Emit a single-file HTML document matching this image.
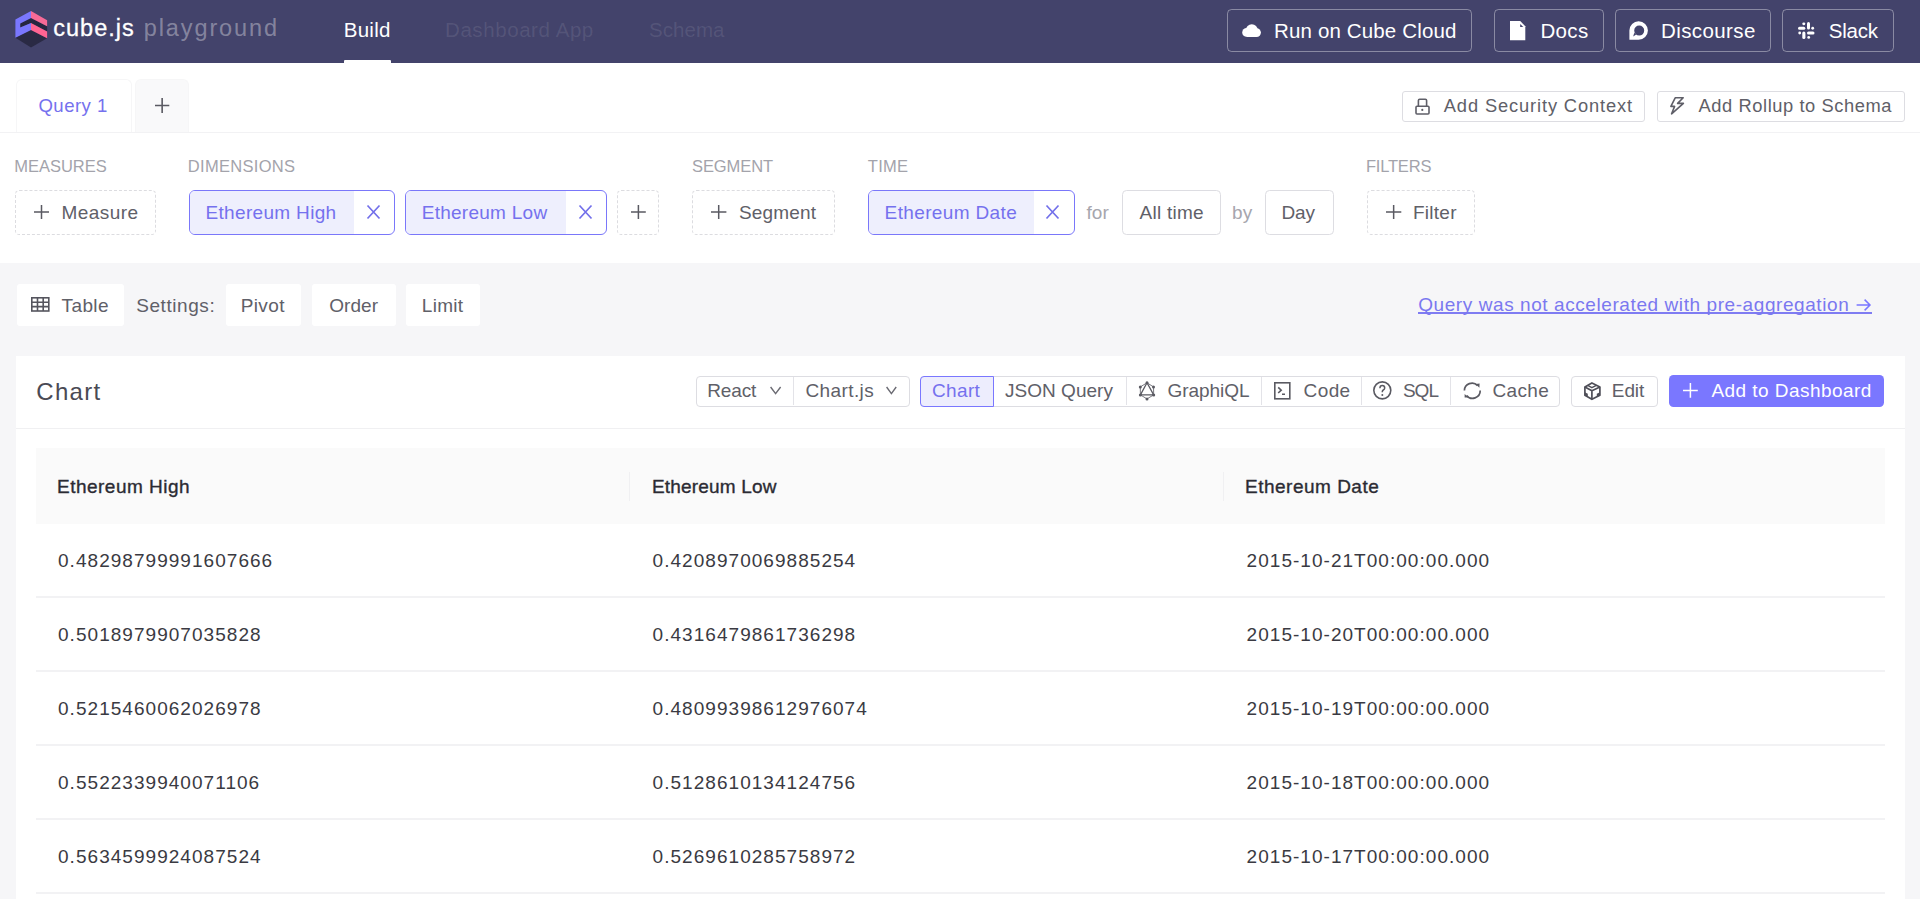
<!DOCTYPE html>
<html><head><meta charset="utf-8"><title>cube.js playground</title>
<style>
html,body{margin:0;padding:0;}
body{width:1920px;height:899px;overflow:hidden;position:relative;background:#f6f6f8;font-family:"Liberation Sans",sans-serif;}
.a{position:absolute;box-sizing:border-box;}
.t{position:absolute;white-space:pre;line-height:1;font-family:"Liberation Sans",sans-serif;}
svg{position:absolute;overflow:visible;}
.hb{border:1.5px solid rgba(255,255,255,0.38);border-radius:4.5px;}
.bd{border:1.5px solid #dddde2;border-radius:4.5px;background:#fff;}
.ds{border:1.5px dashed #dcdce0;border-radius:4.5px;background:#fff;}
.chip{border:1.75px solid #7a77fa;border-radius:6px;background:#fff;overflow:hidden;}
.chip i{position:absolute;left:0;top:0;bottom:0;background:#eeeffd;}
.sb{background:#fff;border-radius:3px;}
.ln{background:#f0f0f2;}

</style></head>
<body>
<!-- header -->
<div class="a" style="left:0;top:0;width:1920px;height:62.5px;background:#43436b"></div>
<div class="a" style="left:344px;top:59.5px;width:47px;height:3px;background:#fff;border-radius:1px 1px 0 0"></div>
<div class="a hb" style="left:1227px;top:9px;width:245px;height:43px"></div>
<div class="a hb" style="left:1494px;top:9px;width:110px;height:43px"></div>
<div class="a hb" style="left:1615px;top:9px;width:156px;height:43px"></div>
<div class="a hb" style="left:1782px;top:9px;width:112px;height:43px"></div>
<!-- white panels -->
<div class="a" style="left:0;top:62.5px;width:1920px;height:200px;background:#fff"></div>
<div class="a" style="left:0;top:131.5px;width:1920px;height:1.5px;background:#f2f2f4"></div>
<div class="a" style="left:16px;top:79px;width:116px;height:53px;background:#fff;border:1.5px solid #f6f6f7;border-bottom:none;border-radius:6px 6px 0 0"></div>
<div class="a" style="left:135px;top:79px;width:54px;height:53px;background:#f9f9fa;border:1.5px solid #f6f6f7;border-bottom:none;border-radius:6px 6px 0 0"></div>
<div class="a bd" style="left:1401.5px;top:90.5px;width:243px;height:31px;border-radius:3px"></div>
<div class="a bd" style="left:1656.5px;top:90.5px;width:248px;height:31px;border-radius:3px"></div>
<!-- query builder -->
<div class="a ds" style="left:15px;top:189.5px;width:141px;height:45.5px"></div>
<div class="a chip" style="left:188.5px;top:189.5px;width:206px;height:45.5px"><i style="width:164px"></i></div>
<div class="a chip" style="left:404.5px;top:189.5px;width:202px;height:45.5px"><i style="width:160px"></i></div>
<div class="a ds" style="left:616.5px;top:189.5px;width:42px;height:45.5px"></div>
<div class="a ds" style="left:692px;top:189.5px;width:143px;height:45.5px"></div>
<div class="a chip" style="left:867.5px;top:189.5px;width:207.5px;height:45.5px"><i style="width:165px"></i></div>
<div class="a bd" style="left:1121.5px;top:189.5px;width:99px;height:45.5px"></div>
<div class="a bd" style="left:1265px;top:189.5px;width:68.5px;height:45.5px"></div>
<div class="a ds" style="left:1366.5px;top:189.5px;width:108.5px;height:45.5px"></div>
<!-- settings row -->
<div class="a sb" style="left:17px;top:284px;width:107px;height:42px"></div>
<div class="a sb" style="left:226px;top:284px;width:74.5px;height:42px"></div>
<div class="a sb" style="left:312px;top:284px;width:83.5px;height:42px"></div>
<div class="a sb" style="left:406px;top:284px;width:73.5px;height:42px"></div>
<!-- card -->
<div class="a" style="left:16px;top:356px;width:1888.5px;height:560px;background:#fff"></div>
<div class="a ln" style="left:16px;top:427.5px;width:1888.5px;height:1.5px"></div>
<div class="a bd" style="left:695.5px;top:375.5px;width:214px;height:31px;border-radius:4px"></div>
<div class="a ln" style="left:792.5px;top:377px;width:1.5px;height:28px;background:#e3e3e8"></div>
<div class="a bd" style="left:920px;top:375.5px;width:640px;height:31px;border-radius:4px"></div>
<div class="a" style="left:920px;top:375.5px;width:73.5px;height:31px;border:1.5px solid #7a77ff;background:#ededfd;border-radius:4px 0 0 4px"></div>
<div class="a ln" style="left:1125.5px;top:377px;width:1.5px;height:28px;background:#e3e3e8"></div>
<div class="a ln" style="left:1260.5px;top:377px;width:1.5px;height:28px;background:#e3e3e8"></div>
<div class="a ln" style="left:1360.5px;top:377px;width:1.5px;height:28px;background:#e3e3e8"></div>
<div class="a ln" style="left:1449.5px;top:377px;width:1.5px;height:28px;background:#e3e3e8"></div>
<div class="a bd" style="left:1571px;top:375.5px;width:86.5px;height:31px;border-radius:4px"></div>
<div class="a" style="left:1669px;top:374.5px;width:215px;height:32.5px;background:#7a77ff;border-radius:4.5px"></div>
<!-- table -->
<div class="a" style="left:35.5px;top:447.5px;width:1849px;height:76px;background:#fafafa"></div>
<div class="a ln" style="left:628.5px;top:472px;width:1.5px;height:28.5px"></div>
<div class="a ln" style="left:1222.5px;top:472px;width:1.5px;height:28.5px"></div>
<div class="a" style="left:35.5px;top:596px;width:1849px;height:1.5px;background:#f2f2f4"></div>
<div class="a" style="left:35.5px;top:670px;width:1849px;height:1.5px;background:#f2f2f4"></div>
<div class="a" style="left:35.5px;top:744px;width:1849px;height:1.5px;background:#f2f2f4"></div>
<div class="a" style="left:35.5px;top:818px;width:1849px;height:1.5px;background:#f2f2f4"></div>
<div class="a" style="left:35.5px;top:892px;width:1849px;height:1.5px;background:#f2f2f4"></div>
<!-- link underline + arrow -->
<div class="a" style="left:1418px;top:312.3px;width:454px;height:1.3px;background:#7f7cf2"></div>
<svg style="left:1856px;top:298px" width="16" height="14" viewBox="0 0 16 14"><path d="M0.6,7 H14 M8.6,1.6 L14,7 L8.6,12.4" stroke="#7a77ff" stroke-width="1.5" fill="none"/></svg>
<!-- logo -->
<svg style="left:0;top:0" width="60" height="60" viewBox="0 0 60 60">
<polygon points="15.4,37.7 31,30 47.1,38.3 31,47.4" fill="#2a2a44"/>
<polygon points="20.2,23.4 31,18 47.1,26.2 47.1,31.6 31,23.1 20.2,27.5" fill="#262640"/>
<polygon points="15.4,19.6 31,10.9 31,18 20.2,23.4 20.2,27.5 31,23.1 31,30 15.4,37.7" fill="#7a77ff"/>
<polygon points="31,10.9 47.1,20.3 47.1,26.2 31,18" fill="#f76a97"/>
<polygon points="31,23.1 47.1,31.6 47.1,38.3 31,30" fill="#ff6492"/>
</svg>
<!-- cloud -->
<svg style="left:1242px;top:24px" width="19" height="13" viewBox="0 0 19 13">
<g fill="#fff"><circle cx="4.6" cy="8.4" r="4.4"/><circle cx="9.8" cy="6.2" r="6"/><circle cx="14.6" cy="8.6" r="4.3"/><rect x="4.6" y="7" width="10" height="6"/></g>
</svg>
<!-- doc -->
<svg style="left:1510px;top:20.7px" width="16" height="20" viewBox="0 0 16 20">
<polygon points="0,0 10.2,0 15.3,5.2 15.3,19.3 0,19.3" fill="#fff"/>
<polygon points="10.2,3 10.2,6.1 13.3,6.1" fill="#43436b"/>
</svg>
<!-- discourse -->
<svg style="left:1629px;top:21px" width="19" height="19" viewBox="0 0 19 19">
<path fill="#fff" fill-rule="evenodd" d="M9.6,0.2 A9.2,9.2 0 1 1 9.6,18.8 L0.4,18.8 L0.4,9.4 A9.2,9.2 0 0 1 9.6,0.2 Z M10.2,4.6 A5,5 0 1 0 10.2,14.6 A5,5 0 1 0 10.2,4.6 Z"/>
<polygon points="4.2,15.6 5.3,11.8 7.2,13.6" fill="#43436b"/>
</svg>
<!-- slack -->
<svg style="left:1797.7px;top:22.3px" width="17" height="17" viewBox="0 0 17 17">
<g fill="#fff">
<rect x="9" y="0" width="3" height="7.4" rx="1.5"/>
<rect x="4.3" y="0.4" width="3" height="2.8" rx="1.4"/>
<rect x="0" y="4.7" width="7.3" height="3" rx="1.5"/>
<rect x="0.3" y="9.6" width="2.8" height="2.9" rx="1.4"/>
<rect x="4.3" y="9.4" width="3.1" height="7.6" rx="1.5"/>
<rect x="9.3" y="14" width="2.8" height="2.8" rx="1.4"/>
<rect x="9" y="9.4" width="7.5" height="3" rx="1.5"/>
<rect x="13.3" y="4.8" width="2.8" height="2.9" rx="1.4"/>
</g>
</svg>
<!-- plus icons -->
<svg style="left:155.3px;top:98.4px" width="15" height="15" viewBox="0 0 15 15"><path d="M7.15,0 V14.9 M0,7.45 H14.3" stroke="#5a5a62" stroke-width="1.6" fill="none"/></svg>
<svg style="left:34px;top:205px" width="15" height="14" viewBox="0 0 15 14"><path d="M7.5,0 V14 M0,7 H15" stroke="#5a5a62" stroke-width="1.5" fill="none"/></svg>
<svg style="left:631px;top:205px" width="15" height="14" viewBox="0 0 15 14"><path d="M7.4,0 V14 M0,7 H14.8" stroke="#5a5a62" stroke-width="1.5" fill="none"/></svg>
<svg style="left:710.6px;top:205px" width="15" height="14" viewBox="0 0 15 14"><path d="M7.7,0 V14 M0,7 H15.4" stroke="#5a5a62" stroke-width="1.5" fill="none"/></svg>
<svg style="left:1385.5px;top:205px" width="15" height="14" viewBox="0 0 15 14"><path d="M7.65,0 V14 M0,7 H15.3" stroke="#5a5a62" stroke-width="1.5" fill="none"/></svg>
<svg style="left:1683px;top:383px" width="15" height="15" viewBox="0 0 15 15"><path d="M7.4,0 V14.8 M0,7.4 H14.8" stroke="#fff" stroke-width="1.5" fill="none"/></svg>
<!-- X icons -->
<svg style="left:367px;top:205px" width="13" height="14" viewBox="0 0 13 14"><path d="M0.5,0.5 L12.5,13.5 M12.5,0.5 L0.5,13.5" stroke="#726fea" stroke-width="1.7" fill="none"/></svg>
<svg style="left:579px;top:205px" width="13" height="14" viewBox="0 0 13 14"><path d="M0.5,0.5 L12.5,13.5 M12.5,0.5 L0.5,13.5" stroke="#726fea" stroke-width="1.7" fill="none"/></svg>
<svg style="left:1046.4px;top:205px" width="13" height="14" viewBox="0 0 13 14"><path d="M0.5,0.5 L12.5,13.5 M12.5,0.5 L0.5,13.5" stroke="#726fea" stroke-width="1.7" fill="none"/></svg>
<!-- lock -->
<svg style="left:1415px;top:97.5px" width="15" height="17" viewBox="0 0 15 17"><g stroke="#5f5f68" stroke-width="1.6" fill="none"><path d="M3.4,8.2 V2.4 Q3.4,1.2 4.6,1.2 H10.4 Q11.6,1.2 11.6,2.4 V8.2"/><rect x="1" y="8.2" width="13" height="7.8" rx="1"/></g><circle cx="7.3" cy="11.9" r="1.1" fill="#5f5f68"/></svg>
<!-- bolt -->
<svg style="left:1670px;top:97px" width="15" height="18" viewBox="0 0 15 18"><path d="M5.2,0.8 H13.2 L7.6,6.4 H13.4 L1.6,16.8 L4.6,9.4 H0.9 Z" stroke="#5f5f68" stroke-width="1.6" fill="none" stroke-linejoin="round"/></svg>
<!-- table icon -->
<svg style="left:31px;top:297px" width="19" height="15" viewBox="0 0 19 15"><g stroke="#55555e" stroke-width="1.6" fill="none"><rect x="0.8" y="0.8" width="17" height="13.2"/><path d="M6.5,0.8 V14 M12.2,0.8 V14 M0.8,5.2 H17.8 M0.8,9.6 H17.8"/></g></svg>
<!-- chevrons -->
<svg style="left:770px;top:386px" width="12" height="9" viewBox="0 0 12 9"><path d="M0.6,1 L5.6,7.6 L10.6,1" stroke="#6a6a72" stroke-width="1.4" fill="none"/></svg>
<svg style="left:886px;top:386px" width="12" height="9" viewBox="0 0 12 9"><path d="M0.6,1 L5.4,7.6 L10.2,1" stroke="#6a6a72" stroke-width="1.4" fill="none"/></svg>
<!-- graphiql -->
<svg style="left:1137.5px;top:380.5px" width="19" height="20" viewBox="0 0 19 20"><g fill="none"><polygon points="9,1.8 15.7,13.9 2.4,13.9" stroke="#5a5a62" stroke-width="1.3"/><polygon points="9,1.8 15.5,5.9 15.7,13.9 9,17.9 2.4,13.9 2.3,5.9" stroke="#6a6a72" stroke-width="0.9"/></g><g fill="#5a5a62"><circle cx="9" cy="1.8" r="1.5"/><circle cx="15.5" cy="5.9" r="1.5"/><circle cx="15.7" cy="13.9" r="1.5"/><circle cx="9" cy="17.9" r="1.5"/><circle cx="2.4" cy="13.9" r="1.5"/><circle cx="2.3" cy="5.9" r="1.5"/></g></svg>
<!-- code -->
<svg style="left:1274px;top:381.5px" width="17" height="18" viewBox="0 0 17 18"><g stroke="#5a5a62" stroke-width="1.6" fill="none"><rect x="0.8" y="0.8" width="15" height="16"/><path d="M4.2,5.4 L7.2,8.2 L4.2,11 M8,12.2 H11"/></g></svg>
<!-- sql question -->
<svg style="left:1373px;top:381px" width="19" height="19" viewBox="0 0 19 19"><circle cx="9.3" cy="9.35" r="8.5" stroke="#5a5a62" stroke-width="1.6" fill="none"/><path d="M6.9,7.2 Q6.9,4.6 9.3,4.6 Q11.7,4.6 11.7,6.9 Q11.7,8.3 10.3,9 Q9.3,9.6 9.3,10.8 V11.3" stroke="#5a5a62" stroke-width="1.5" fill="none"/><circle cx="9.3" cy="13.9" r="1" fill="#5a5a62"/></svg>
<!-- cache sync -->
<svg style="left:1462.5px;top:381px" width="19" height="19" viewBox="0 0 19 19"><g stroke="#5a5a62" stroke-width="1.7" fill="none"><path d="M1.4,9.6 A7.6,7.6 0 0 1 14.6,4.6"/><path d="M17.2,9.6 A7.6,7.6 0 0 1 3.6,14.4"/></g><polygon points="12.6,3 16.6,2.6 16.4,6.8" fill="#5a5a62"/><polygon points="1.6,13 5.6,16.4 1.6,16.6" fill="#5a5a62"/></svg>
<!-- edit cube -->
<svg style="left:1583.5px;top:381.5px" width="17" height="18" viewBox="0 0 17 18"><g stroke="#4f4f58" stroke-width="1.7" fill="none" stroke-linejoin="round"><polygon points="7.9,0.9 15.9,4.9 15.9,13.2 7.9,17.3 0.9,13.3 0.9,4.9"/><path d="M0.9,4.9 L7.9,8.8 L15.9,4.9 M7.9,8.8 V17.3"/><path d="M3.6,3.4 L7.9,5.7 L12.4,3.4" stroke-width="1.4"/></g><g fill="#4f4f58"><polygon points="0.9,10.2 3.8,11.8 3.8,15 0.9,13.3"/><polygon points="15.9,10.2 12.8,11.8 12.8,15.1 15.9,13.3"/></g></svg>

<div class="t" style="left:53.30px;top:17.01px;font-size:23.5px;letter-spacing:0.999px;color:#ffffff;-webkit-text-stroke:0.3px #fff;">cube.js</div>
<div class="t" style="left:143.80px;top:16.81px;font-size:23.5px;letter-spacing:1.887px;color:rgba(255,255,255,0.36);">playground</div>
<div class="t" style="left:343.70px;top:20.15px;font-size:20.5px;letter-spacing:0.279px;color:#ffffff;">Build</div>
<div class="t" style="left:445.00px;top:20.35px;font-size:20.5px;letter-spacing:0.579px;color:rgba(255,255,255,0.10);">Dashboard App</div>
<div class="t" style="left:649.00px;top:20.35px;font-size:20.5px;letter-spacing:0.040px;color:rgba(255,255,255,0.10);">Schema</div>
<div class="t" style="left:1274.00px;top:20.55px;font-size:20.5px;letter-spacing:0.146px;color:#ffffff;">Run on Cube Cloud</div>
<div class="t" style="left:1540.40px;top:20.55px;font-size:20.5px;letter-spacing:0.381px;color:#ffffff;">Docs</div>
<div class="t" style="left:1661.00px;top:20.55px;font-size:20.5px;letter-spacing:0.408px;color:#ffffff;">Discourse</div>
<div class="t" style="left:1828.80px;top:20.55px;font-size:20.5px;letter-spacing:-0.245px;color:#ffffff;">Slack</div>
<div class="t" style="left:38.40px;top:97.46px;font-size:18.6px;letter-spacing:0.467px;color:#7571ee;">Query 1</div>
<div class="t" style="left:1443.80px;top:97.41px;font-size:18.3px;letter-spacing:0.871px;color:#606068;">Add Security Context</div>
<div class="t" style="left:1698.60px;top:97.41px;font-size:18.3px;letter-spacing:0.577px;color:#606068;">Add Rollup to Schema</div>
<div class="t" style="left:14.30px;top:158.43px;font-size:16.5px;letter-spacing:-0.028px;color:#a3a3ab;">MEASURES</div>
<div class="t" style="left:187.80px;top:158.43px;font-size:16.5px;letter-spacing:0.299px;color:#a3a3ab;">DIMENSIONS</div>
<div class="t" style="left:692.00px;top:158.43px;font-size:16.5px;letter-spacing:-0.085px;color:#a3a3ab;">SEGMENT</div>
<div class="t" style="left:867.80px;top:158.43px;font-size:16.5px;letter-spacing:0.264px;color:#a3a3ab;">TIME</div>
<div class="t" style="left:1365.90px;top:158.43px;font-size:16.5px;letter-spacing:-0.186px;color:#a3a3ab;">FILTERS</div>
<div class="t" style="left:61.50px;top:203.42px;font-size:19px;letter-spacing:0.441px;color:#606068;">Measure</div>
<div class="t" style="left:205.50px;top:203.42px;font-size:19px;letter-spacing:0.328px;color:#7571ee;">Ethereum High</div>
<div class="t" style="left:421.70px;top:203.42px;font-size:19px;letter-spacing:0.265px;color:#7571ee;">Ethereum Low</div>
<div class="t" style="left:739.00px;top:203.42px;font-size:19px;letter-spacing:0.155px;color:#606068;">Segment</div>
<div class="t" style="left:884.60px;top:203.42px;font-size:19px;letter-spacing:0.365px;color:#7571ee;">Ethereum Date</div>
<div class="t" style="left:1086.40px;top:203.42px;font-size:19px;letter-spacing:0.077px;color:#a6a6ae;">for</div>
<div class="t" style="left:1139.60px;top:203.42px;font-size:19px;letter-spacing:0.240px;color:#606068;">All time</div>
<div class="t" style="left:1232.00px;top:203.42px;font-size:19px;letter-spacing:0.133px;color:#a6a6ae;">by</div>
<div class="t" style="left:1281.60px;top:203.42px;font-size:19px;letter-spacing:-0.194px;color:#606068;">Day</div>
<div class="t" style="left:1413.00px;top:203.42px;font-size:19px;letter-spacing:0.261px;color:#606068;">Filter</div>
<div class="t" style="left:61.50px;top:295.92px;font-size:19px;letter-spacing:0.411px;color:#606068;">Table</div>
<div class="t" style="left:136.20px;top:295.92px;font-size:19px;letter-spacing:0.568px;color:#606068;">Settings:</div>
<div class="t" style="left:240.70px;top:295.92px;font-size:19px;letter-spacing:0.385px;color:#606068;">Pivot</div>
<div class="t" style="left:329.20px;top:295.92px;font-size:19px;letter-spacing:0.065px;color:#606068;">Order</div>
<div class="t" style="left:421.80px;top:295.92px;font-size:19px;letter-spacing:0.291px;color:#606068;">Limit</div>
<div class="t" style="left:1418.20px;top:295.22px;font-size:19px;letter-spacing:0.579px;color:#7b78f0;">Query was not accelerated with pre-aggregation</div>
<div class="t" style="left:36.30px;top:379.78px;font-size:24px;letter-spacing:1.295px;color:#4a4a54;">Chart</div>
<div class="t" style="left:707.20px;top:381.32px;font-size:19px;letter-spacing:-0.139px;color:#606068;">React</div>
<div class="t" style="left:805.40px;top:381.32px;font-size:19px;letter-spacing:0.406px;color:#606068;">Chart.js</div>
<div class="t" style="left:932.00px;top:381.32px;font-size:19px;letter-spacing:0.354px;color:#7571ee;">Chart</div>
<div class="t" style="left:1004.90px;top:381.32px;font-size:19px;letter-spacing:0.045px;color:#606068;">JSON Query</div>
<div class="t" style="left:1167.60px;top:381.32px;font-size:19px;letter-spacing:-0.058px;color:#606068;">GraphiQL</div>
<div class="t" style="left:1303.60px;top:381.32px;font-size:19px;letter-spacing:0.382px;color:#606068;">Code</div>
<div class="t" style="left:1402.90px;top:381.32px;font-size:19px;letter-spacing:-0.976px;color:#606068;">SQL</div>
<div class="t" style="left:1492.50px;top:381.32px;font-size:19px;letter-spacing:0.336px;color:#606068;">Cache</div>
<div class="t" style="left:1611.80px;top:381.32px;font-size:19px;letter-spacing:-0.087px;color:#606068;">Edit</div>
<div class="t" style="left:1711.40px;top:381.32px;font-size:19px;letter-spacing:0.454px;color:#ffffff;">Add to Dashboard</div>
<div class="t" style="left:57.00px;top:476.82px;font-size:19px;letter-spacing:0.487px;color:#2b2b33;-webkit-text-stroke:0.35px currentColor;">Ethereum High</div>
<div class="t" style="left:652.00px;top:476.82px;font-size:19px;letter-spacing:0.174px;color:#2b2b33;-webkit-text-stroke:0.35px currentColor;">Ethereum Low</div>
<div class="t" style="left:1245.00px;top:476.82px;font-size:19px;letter-spacing:0.498px;color:#2b2b33;-webkit-text-stroke:0.35px currentColor;">Ethereum Date</div>
<div class="t" style="left:58.00px;top:550.62px;font-size:19px;letter-spacing:1.038px;color:#3a3a42">0.48298799991607666</div>
<div class="t" style="left:652.60px;top:550.62px;font-size:19px;letter-spacing:1.038px;color:#3a3a42">0.4208970069885254</div>
<div class="t" style="left:1246.60px;top:550.62px;font-size:19px;letter-spacing:1.033px;color:#3a3a42">2015-10-21T00:00:00.000</div>
<div class="t" style="left:58.00px;top:624.62px;font-size:19px;letter-spacing:1.038px;color:#3a3a42">0.5018979907035828</div>
<div class="t" style="left:652.60px;top:624.62px;font-size:19px;letter-spacing:1.038px;color:#3a3a42">0.4316479861736298</div>
<div class="t" style="left:1246.60px;top:624.62px;font-size:19px;letter-spacing:1.033px;color:#3a3a42">2015-10-20T00:00:00.000</div>
<div class="t" style="left:58.00px;top:698.62px;font-size:19px;letter-spacing:1.038px;color:#3a3a42">0.5215460062026978</div>
<div class="t" style="left:652.60px;top:698.62px;font-size:19px;letter-spacing:1.038px;color:#3a3a42">0.48099398612976074</div>
<div class="t" style="left:1246.60px;top:698.62px;font-size:19px;letter-spacing:1.033px;color:#3a3a42">2015-10-19T00:00:00.000</div>
<div class="t" style="left:58.00px;top:772.62px;font-size:19px;letter-spacing:1.038px;color:#3a3a42">0.5522339940071106</div>
<div class="t" style="left:652.60px;top:772.62px;font-size:19px;letter-spacing:1.038px;color:#3a3a42">0.5128610134124756</div>
<div class="t" style="left:1246.60px;top:772.62px;font-size:19px;letter-spacing:1.033px;color:#3a3a42">2015-10-18T00:00:00.000</div>
<div class="t" style="left:58.00px;top:846.62px;font-size:19px;letter-spacing:1.038px;color:#3a3a42">0.5634599924087524</div>
<div class="t" style="left:652.60px;top:846.62px;font-size:19px;letter-spacing:1.038px;color:#3a3a42">0.5269610285758972</div>
<div class="t" style="left:1246.60px;top:846.62px;font-size:19px;letter-spacing:1.033px;color:#3a3a42">2015-10-17T00:00:00.000</div>
</body></html>
